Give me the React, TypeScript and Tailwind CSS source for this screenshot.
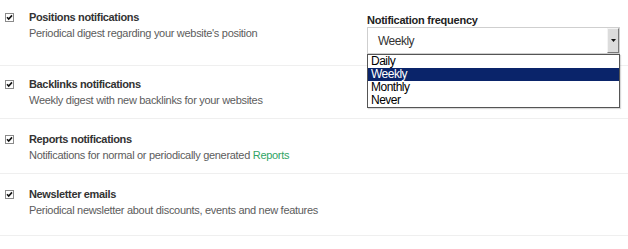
import React from "react";

function Check() {
  return (
    <svg width="9" height="9" viewBox="0 0 9 9" className="shrink-0 mt-[4px]">
      <rect x="0.5" y="0.5" width="8" height="8" fill="#fff" stroke="#8a8a8a" />
      <path d="M2 4.2 L3.7 6 L7 2.4" fill="none" stroke="#111" strokeWidth="1.6" />
    </svg>
  );
}

function Item({ title, children, className }: { title: string; children: React.ReactNode; className?: string }) {
  return (
    <div className={"flex gap-[15px] pl-[5px] " + (className || "")}>
      <Check />
      <div>
        <div className="text-[11px] leading-[16px] font-bold text-[#333] tracking-[-0.35px]">{title}</div>
        <div className="text-[11px] leading-[16px] text-[#5c5c5c] tracking-[-0.3px]">{children}</div>
      </div>
    </div>
  );
}

export default function App() {
  return (
    <div className="w-[628px] h-[249px] bg-white overflow-hidden font-['Liberation_Sans',Arial,sans-serif]">
      {/* Positions + frequency */}
      <div className="flex justify-between border-b border-[#efefef] h-[66px]">
        <Item title="Positions notifications" className="pt-[9px]">
          Periodical digest regarding your website's position
        </Item>
        <div className="relative w-[253px] mr-[8px] pt-[13px]">
          <div className="text-[11px] leading-[14px] font-bold text-[#222] tracking-[-0.25px]">Notification frequency</div>
          <div className="flex items-center justify-between h-[27px] border border-[#cfcfcf] bg-white">
            <span className="pl-[10px] text-[12px] text-[#333] tracking-[-0.5px]">Weekly</span>
            <div className="flex items-center justify-center w-[12px] h-[25px] bg-[#dcdcdc] border-l border-t border-[#f4f4f4] border-r border-b border-r-[#7a7a7a] border-b-[#7a7a7a]">
              <svg width="5" height="3" viewBox="0 0 5 3">
                <path d="M0 0 H5 L2.5 3 Z" fill="#111" />
              </svg>
            </div>
          </div>
          <div className="absolute left-0 top-[54px] w-[253px] border border-[#555] bg-white shadow-[1px_1px_1px_rgba(0,0,0,0.15)] z-10 text-[12px] leading-[13px] text-black tracking-[-0.5px]">
            <div className="pl-[3px]">Daily</div>
            <div className="pl-[3px] bg-[#0a246a] text-white">Weekly</div>
            <div className="pl-[3px]">Monthly</div>
            <div className="pl-[3px]">Never</div>
          </div>
        </div>
      </div>

      <Item title="Backlinks notifications" className="pt-[10px] h-[53px] border-b border-[#efefef]">
        Weekly digest with new backlinks for your websites
      </Item>

      <Item title="Reports notifications" className="pt-[12px] h-[55px] border-b border-[#efefef]">
        Notifications for normal or periodically generated <a className="text-[#2fa565]">Reports</a>
      </Item>

      <Item title="Newsletter emails" className="pt-[12px] h-[62px] border-b border-[#efefef]">
        Periodical newsletter about discounts, events and new features
      </Item>
    </div>
  );
}
